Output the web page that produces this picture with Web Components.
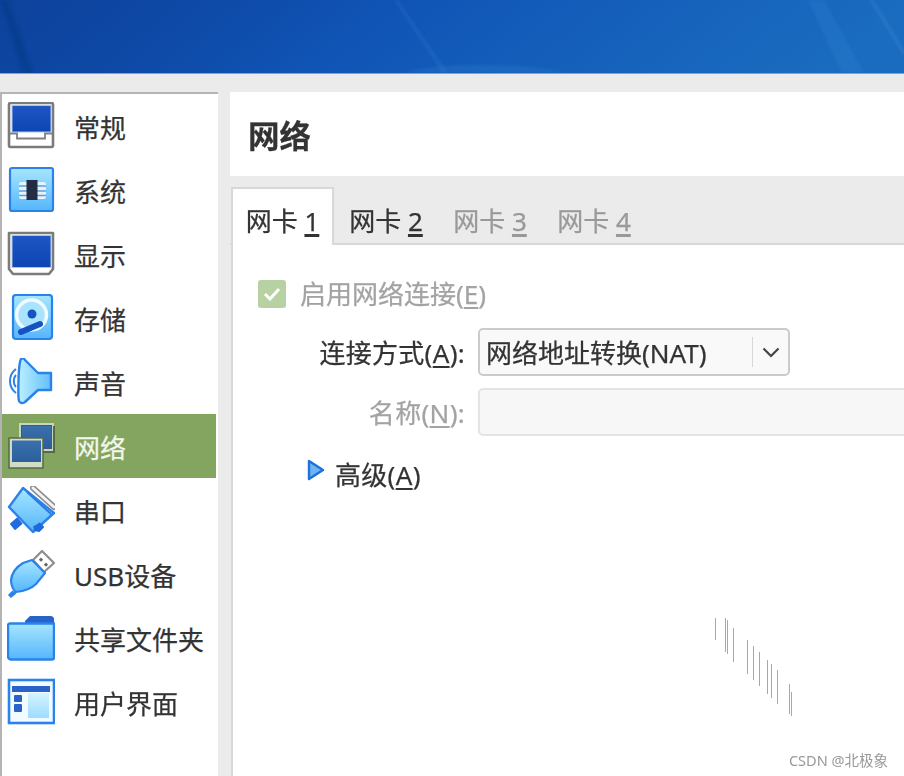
<!DOCTYPE html>
<html lang="zh">
<head>
<meta charset="utf-8">
<title>网络</title>
<style>
    html, body { margin: 0; height: 100%; background: #ebebeb; overflow: hidden; }
    body { font-family: "Noto Sans", "Noto Sans CJK SC", sans-serif; color: #333; }
</style>
</head>
<body>
<vb-settings>
    <vb-sidebar slot="sidebar">
        <vb-nav-item icon="general">常规</vb-nav-item>
        <vb-nav-item icon="system">系统</vb-nav-item>
        <vb-nav-item icon="display">显示</vb-nav-item>
        <vb-nav-item icon="storage">存储</vb-nav-item>
        <vb-nav-item icon="audio">声音</vb-nav-item>
        <vb-nav-item icon="network" selected>网络</vb-nav-item>
        <vb-nav-item icon="serial">串口</vb-nav-item>
        <vb-nav-item icon="usb">USB设备</vb-nav-item>
        <vb-nav-item icon="folder">共享文件夹</vb-nav-item>
        <vb-nav-item icon="ui">用户界面</vb-nav-item>
    </vb-sidebar>
    <vb-page-title slot="title">网络</vb-page-title>
    <vb-tabs slot="tabs">
        <vb-tab active>网卡 <u>1</u></vb-tab>
        <vb-tab>网卡 <u>2</u></vb-tab>
        <vb-tab disabled>网卡 <u>3</u></vb-tab>
        <vb-tab disabled>网卡 <u>4</u></vb-tab>
    </vb-tabs>
    <vb-network-form slot="content"></vb-network-form>
</vb-settings>
<vb-watermark>CSDN @北极象</vb-watermark>

<script>
const GRAD = `
    <defs>
        <linearGradient id="screen" x1="0" y1="0" x2="0" y2="1"><stop offset="0" stop-color="#1f56c4"/><stop offset="1" stop-color="#0d45b4"/></linearGradient>
        <linearGradient id="sky" x1="0" y1="0" x2="0" y2="1"><stop offset="0" stop-color="#a6e6ff"/><stop offset="1" stop-color="#55b6fb"/></linearGradient>
        <linearGradient id="sky2" x1="0" y1="0" x2="1" y2="0"><stop offset="0" stop-color="#bdefff"/><stop offset="1" stop-color="#62bffc"/></linearGradient>
        <linearGradient id="pale" x1="0" y1="0" x2="0" y2="1"><stop offset="0" stop-color="#d4f4ff"/><stop offset="1" stop-color="#9edcff"/></linearGradient>
        <linearGradient id="net" x1="0" y1="0" x2="0" y2="1"><stop offset="0" stop-color="#3a70ad"/><stop offset="1" stop-color="#2b5f9c"/></linearGradient>
    </defs>`;

const ICONS = {
    general: `
        <rect x="2" y="1" width="44" height="44" rx="1.500" fill="#fff" stroke="#7b7b7b" stroke-width="2.600"/>
        <rect x="5" y="3.500" width="39" height="26.500" fill="url(#screen)" stroke="#a8c6ea" stroke-width="1"/>
        <path d="M3 31.500h7v5h28v-5h7" fill="none" stroke="#808080" stroke-width="1.800"/>`,
    system: `
        <rect x="3" y="2" width="43" height="43" rx="2" fill="url(#sky)" stroke="#2a82ea" stroke-width="2.200"/>
        <rect x="12" y="16" width="27" height="17" rx="2" fill="#e4f3fc"/>
        <path d="M12 20h27M12 25h27M12 29.500h27" stroke="#5f9fd8" stroke-width="1.500"/>
        <rect x="19.500" y="14" width="11" height="20" fill="#232c42"/>`,
    display: `
        <path d="M2 3h44v36l-4 5H6l-4-5z" fill="#fff" stroke="#7b7b7b" stroke-width="2.600" stroke-linejoin="round"/>
        <rect x="5" y="5.500" width="39" height="32" fill="url(#screen)" stroke="#a8c6ea" stroke-width="1"/>`,
    storage: `
        <rect x="6" y="1" width="39" height="44" rx="3" fill="url(#sky)" stroke="#2a82ea" stroke-width="2.200"/>
        <circle cx="24.500" cy="21" r="15" fill="#a9e3fd" stroke="#f2fbff" stroke-width="3.500"/>
        <circle cx="25" cy="20" r="4.500" fill="#1553c2"/>
        <path d="M33 30 L14 38" stroke="#1553c2" stroke-width="6" stroke-linecap="round"/>`,
    audio: `
        <path d="M14 1c2-1 3-1 4 1l13 13h13v17H31L18 44c-2 2-5 1-6-1-1-3-1-37 2-42z" fill="url(#sky2)" stroke="#2a82ea" stroke-width="2.400" stroke-linejoin="round"/>
        <path d="M9 11c-8 6-8 18 0 24M9 17c-3 3-3 9 0 12" fill="none" stroke="#2a82ea" stroke-width="2"/>`,
    network: `
        <rect x="13" y="2" width="33" height="26" fill="#3d5a80" stroke="#c9d6bb" stroke-width="2"/>
        <path d="M47 4v26H34" fill="none" stroke="#566a47" stroke-width="2"/>
        <rect x="15" y="4" width="29" height="22" fill="url(#net)"/>
        <rect x="2" y="16" width="34" height="30" fill="#d0dcc4" stroke="#566a47" stroke-width="1.500"/>
        <rect x="5" y="18.500" width="29" height="21.500" fill="url(#net)"/>`,
    serial: `
        <path d="M16 2l31 25-21 19L2 21z" fill="url(#sky)" stroke="#2a82ea" stroke-width="2.400" stroke-linejoin="round"/>
        <path d="M26 2l21 19" stroke="#8d8d8d" stroke-width="6" stroke-linecap="round"/>
        <path d="M26 2l21 19" stroke="#f2f2f2" stroke-width="3" stroke-linecap="round"/>
        <path d="M20 6L44 28" stroke="#2a7ae4" stroke-width="2"/>
        <path d="M11 32l-7 6 4 5 7-6M27 40l1 4 4 1 4-4-4-4" fill="#1f6ae0" stroke="#1f6ae0" stroke-width="2" stroke-linejoin="round"/>`,
    usb: `
        <path d="M35 1l12 12-10 9-11-12z" fill="#fff" stroke="#8d8d8d" stroke-width="2.200" stroke-linejoin="round"/>
        <rect x="33" y="8" width="3" height="3" fill="#666" transform="rotate(45 34 9)"/>
        <rect x="38" y="13" width="3" height="3" fill="#666" transform="rotate(45 39 14)"/>
        <path d="M25 10l13 13-9 11c-5 5-11 7-20 8-2-1-5-6-5-12 1-8 7-14 12-17z" fill="url(#sky)" stroke="#2a82ea" stroke-width="2.200" stroke-linejoin="round"/>
        <path d="M6 41l-4 4 2 2 5-4" fill="#2a82ea" stroke="#2a82ea" stroke-width="1.500"/>`,
    folder: `
        <path d="M18 7l5-5h21c1 0 3 1 3 3v5H18z" fill="#2a63c8"/>
        <path d="M2 9.500h45v34c0 1-1 2-2 2H4c-1 0-3-1-3-3V11.500c0-1 1-2 2-2z" fill="url(#sky)" stroke="#2a82ea" stroke-width="2.400"/>`,
    ui: `
        <rect x="2" y="2" width="45" height="43" fill="#f2fbff" stroke="#2a82ea" stroke-width="2.600"/>
        <rect x="5" y="8" width="38" height="6" fill="#2a63c8"/>
        <rect x="7" y="17" width="8" height="7" rx="1" fill="#2a63c8"/>
        <rect x="7" y="26" width="8" height="8" rx="1" fill="#2a63c8"/>
        <rect x="21" y="15" width="21" height="25" fill="url(#pale)"/>`
};

class VbIcon extends HTMLElement {
    static get observedAttributes() { return ['name']; }
    constructor() {
        super();
        this.attachShadow({ mode: 'open' });
    }
    attributeChangedCallback() {
        this.shadowRoot.innerHTML = `
            <style>
                :host { display: block; width: 48px; height: 48px; flex: none; }
                svg { display: block; }
            </style>
            <svg width="48" height="48" viewBox="0 0 48 48">${GRAD}${ICONS[this.getAttribute('name')] || ''}</svg>`;
    }
}
customElements.define('vb-icon', VbIcon);

class VbSettings extends HTMLElement {
    constructor() {
        super();
        this.attachShadow({ mode: 'open' });
        this.shadowRoot.innerHTML = `
            <style>
                :host {
                    display: flex; flex-direction: column; height: 776px; overflow: hidden;
                    filter: blur(0.7px);
                    -webkit-text-stroke: 0.25px currentColor;
                }
                .wallpaper { flex: none; height: 73px; border-bottom: 1px solid #6aa9e6; }
                .wallpaper svg { display: block; }
                .body { flex: 1; display: flex; padding-top: 18px; min-height: 0; }
                .side { flex: none; width: 218px; display: flex; }
                .main { flex: 1; min-width: 0; margin-left: 12px; display: flex; flex-direction: column; }
                .scratches { position: absolute; left: 0; top: 0; pointer-events: none; }
            </style>
            <div class="wallpaper">
                <svg width="904" height="73" viewBox="0 0 904 73" preserveAspectRatio="none">
                    <defs>
                        <linearGradient id="wall" x1="0" y1="0" x2="1" y2="0.100">
                            <stop offset="0" stop-color="#0d429c"/>
                            <stop offset="0.250" stop-color="#0e4aa8"/>
                            <stop offset="0.450" stop-color="#1055b6"/>
                            <stop offset="1" stop-color="#1a6cc0"/>
                        </linearGradient>
                        <filter id="soft"><feGaussianBlur stdDeviation="1.500"/></filter>
                    </defs>
                    <rect width="904" height="73" fill="url(#wall)"/>
                    <g filter="url(#soft)">
                        <path d="M0 0l8 0 26 73h-12z" fill="#0b3a80" opacity="0.400"/>
                        <path d="M394 0l4 0 50 73h-6z" fill="#3d8ad6" opacity="0.200"/>
                        <path d="M808 0h16l40 73h-22z" fill="#3d8ad6" opacity="0.220"/>
                        <path d="M870 0h3l31 50v6z" fill="#5aa0e0" opacity="0.250"/>
                        <path d="M400 73c40-10 110-12 170 0z" fill="#2f7fd0" opacity="0.300"/>
                    </g>
                </svg>
            </div>
            <div class="body">
                <div class="side"><slot name="sidebar"></slot></div>
                <div class="main">
                    <slot name="title"></slot>
                    <slot name="tabs"></slot>
                    <slot name="content"></slot>
                </div>
            </div>
            <svg class="scratches" width="904" height="776" stroke="#a8a8a8" stroke-width="1">
                <path d="M715.500 618v22M725.500 618v34M727.500 620v34M733.500 628v34M747.500 640v34M753.500 646v34M759.500 652v34M767.500 660v34M771.500 664v34M777.500 670v34M789.500 684v30M791.500 692v24"/>
            </svg>`;
    }
}
customElements.define('vb-settings', VbSettings);

class VbSidebar extends HTMLElement {
    constructor() {
        super();
        this.attachShadow({ mode: 'open' });
        this.shadowRoot.innerHTML = `
            <style>
                :host {
                    display: block; width: 100%; box-sizing: border-box;
                    background: #fff;
                    border-top: 2px solid #b4b4b4;
                    border-left: 2px solid #b4b4b4;
                    padding-right: 2px;
                }
            </style>
            <slot></slot>`;
    }
}
customElements.define('vb-sidebar', VbSidebar);

class VbNavItem extends HTMLElement {
    constructor() {
        super();
        this.attachShadow({ mode: 'open' });
        this.shadowRoot.innerHTML = `
            <style>
                :host {
                    display: flex; align-items: center; gap: 19px;
                    height: 64px; padding-left: 5px;
                    font-size: 26px; color: #333;
                }
                :host([selected]) { background: #83a55f; color: #f2f6ec; }
                .text { padding-top: 2px; white-space: nowrap; }
            </style>
            <vb-icon></vb-icon>
            <span class="text"><slot></slot></span>`;
    }
    connectedCallback() {
        this.shadowRoot.querySelector('vb-icon').setAttribute('name', this.getAttribute('icon'));
    }
}
customElements.define('vb-nav-item', VbNavItem);

class VbPageTitle extends HTMLElement {
    constructor() {
        super();
        this.attachShadow({ mode: 'open' });
        this.shadowRoot.innerHTML = `
            <style>
                :host {
                    display: flex; align-items: center; height: 84px;
                    padding-left: 18px;
                    background: #fff;
                    font-size: 31.500px; font-weight: 700; color: #333;
                }
            </style>
            <span><slot></slot></span>`;
    }
}
customElements.define('vb-page-title', VbPageTitle);

class VbTabs extends HTMLElement {
    constructor() {
        super();
        this.attachShadow({ mode: 'open' });
        this.shadowRoot.innerHTML = `
            <style>
                :host {
                    display: flex; align-items: flex-end; height: 69px;
                    box-sizing: border-box; padding-left: 1px;
                    border-bottom: 2px solid #d8d8d8;
                }
            </style>
            <slot></slot>`;
    }
}
customElements.define('vb-tabs', VbTabs);

class VbTab extends HTMLElement {
    constructor() {
        super();
        this.attachShadow({ mode: 'open' });
        this.shadowRoot.innerHTML = `
            <style>
                :host {
                    display: flex; align-items: center; justify-content: center;
                    box-sizing: border-box; width: 104px; height: 56px;
                    font-size: 26px; color: #333; white-space: nowrap;
                    padding: 9px 0 0 0;
                }
                :host([active]) {
                    width: 103px; height: 58px; margin-bottom: -2px;
                    background: #fff;
                    border: 2px solid #d8d8d8; border-bottom: 0;
                    padding: 5px 0 0 0;
                }
                :host([disabled]) { color: #999; }
                ::slotted(u) { text-underline-offset: 3px; text-decoration-thickness: 3px; }
            </style>
            <span><slot></slot></span>`;
    }
}
customElements.define('vb-tab', VbTab);

class VbNetworkForm extends HTMLElement {
    constructor() {
        super();
        this.attachShadow({ mode: 'open' });
        this.shadowRoot.innerHTML = `
            <style>
                :host {
                    display: block; height: 531px; margin-left: 1px;
                    background: #fff; border-left: 2px solid #d8d8d8;
                    font-size: 26px; color: #333;
                    padding-top: 29px; box-sizing: border-box; white-space: nowrap;
                }
                .enable { display: flex; align-items: center; gap: 14px; height: 40px; padding-left: 25px; color: #a3a3a3; margin-bottom: 14px; }
                .enable > span:last-child { margin-top: -3px; }
                .check { width: 28px; height: 28px; border-radius: 3px; background: #b8d1a3; display: flex; align-items: center; justify-content: center; }
                .grid {
                    display: grid; grid-template-columns: 232px 1fr; column-gap: 13px; row-gap: 12px;
                    align-items: center;
                }
                .label { text-align: right; letter-spacing: 0.3px; }
                .muted { color: #a3a3a3; }
                .combo {
                    display: flex; align-items: center; box-sizing: border-box;
                    width: 312px; height: 48px;
                    background: #f9f9f9; border: 2px solid #cbcbcb; border-radius: 5px;
                    padding-left: 6px;
                }
                .combo .value { flex: 1; }
                .combo .sep { width: 1px; height: 30px; background: #d8d8d8; }
                .combo .arrow { width: 35px; display: flex; justify-content: center; }
                .name {
                    box-sizing: border-box; height: 48px; margin-right: -8px;
                    background: #f7f7f7; border: 2px solid #e4e4e4; border-radius: 5px;
                }
                .advanced { display: flex; align-items: center; gap: 10px; margin: 14px 0 0 74px; height: 48px; letter-spacing: 0.3px; }
                .advanced svg { margin-top: -8px; }
                u { text-underline-offset: 3px; text-decoration-thickness: 2px; }
            </style>
            <div class="enable">
                <span class="check">
                    <svg width="18" height="14" viewBox="0 0 18 14"><path d="M2 7l5 5 9-10" fill="none" stroke="#fff" stroke-width="3"/></svg>
                </span>
                <span>启用网络连接(<u>E</u>)</span>
            </div>
            <div class="grid">
                <span class="label">连接方式(<u>A</u>):</span>
                <div class="combo">
                    <span class="value">网络地址转换(NAT)</span>
                    <span class="sep"></span>
                    <span class="arrow"><svg width="18" height="11" viewBox="0 0 18 11"><path d="M1.500 1.500L9 9l7.500-7.500" fill="none" stroke="#444" stroke-width="2.200"/></svg></span>
                </div>
                <span class="label muted">名称(<u>N</u>):</span>
                <div class="name"></div>
            </div>
            <div class="advanced">
                <svg width="18" height="22" viewBox="0 0 18 22"><path d="M2 2l14 9L2 20z" fill="#6cb4f4" stroke="#1f6fdc" stroke-width="2.400" stroke-linejoin="round"/></svg>
                <span>高级(<u>A</u>)</span>
            </div>`;
    }
}
customElements.define('vb-network-form', VbNetworkForm);

class VbWatermark extends HTMLElement {
    constructor() {
        super();
        this.attachShadow({ mode: 'open' });
        this.shadowRoot.innerHTML = `
            <style>
                :host { position: absolute; right: 16px; bottom: 6px; font-size: 14.500px; line-height: 20px; color: #999; }
            </style>
            <slot></slot>`;
    }
}
customElements.define('vb-watermark', VbWatermark);
</script>
</body>
</html>
